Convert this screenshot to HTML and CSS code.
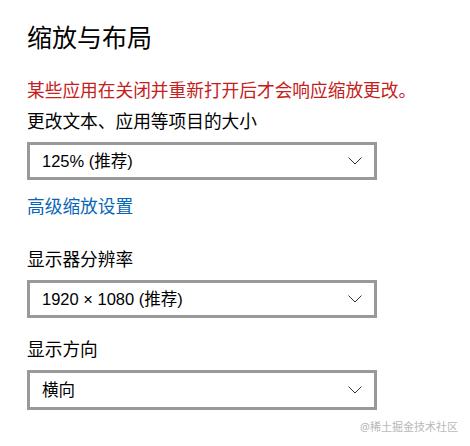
FILE: index.html
```html
<!DOCTYPE html>
<html lang="zh-CN">
<head>
<meta charset="utf-8">
<title>缩放与布局</title>
<link rel="stylesheet" href="styles.css">
</head>
<body>
<main class="page">
  <h1 class="title">缩放与布局</h1>
  <p class="note">某些应用在关闭并重新打开后才会响应缩放更改。</p>
  <p class="label">更改文本、应用等项目的大小</p>
  <div class="select">
    <span class="value">125% (推荐)</span>
    <svg class="chev" width="14" height="8" viewBox="0 0 14 8"><polyline points="0.5,0.5 7,7 13.5,0.5" fill="none" stroke="#333" stroke-width="1"/></svg>
  </div>
  <a class="link" href="#">高级缩放设置</a>
  <p class="label label-gap">显示器分辨率</p>
  <div class="select">
    <span class="value">1920 × 1080 (推荐)</span>
    <svg class="chev" width="14" height="8" viewBox="0 0 14 8"><polyline points="0.5,0.5 7,7 13.5,0.5" fill="none" stroke="#333" stroke-width="1"/></svg>
  </div>
  <p class="label label-gap2">显示方向</p>
  <div class="select select-tall">
    <span class="value">横向</span>
    <svg class="chev" width="14" height="8" viewBox="0 0 14 8"><polyline points="0.5,0.5 7,7 13.5,0.5" fill="none" stroke="#333" stroke-width="1"/></svg>
  </div>
</main>
<div class="watermark">@稀土掘金技术社区</div>
</body>
</html>
```
FILE: styles.css
```css
html, body {
  margin: 0;
  padding: 0;
  background: #fff;
}
body {
  width: 470px;
  height: 446px;
  position: relative;
  overflow: hidden;
  font-family: "Noto Sans", "Noto Sans CJK SC", sans-serif;
  color: #000;
}
.page {
  display: flex;
  flex-direction: column;
  align-items: flex-start;
  padding: 21px 0 0 27px;
}
.title {
  margin: 0;
  font-size: 25px;
  line-height: 32px;
  font-weight: 400;
}
.note {
  margin: 25px 0 0;
  font-size: 17.7px;
  line-height: 24px;
  color: #c42020;
  white-space: nowrap;
}
.label {
  margin: 7px 0 0;
  font-size: 17.7px;
  line-height: 24px;
}
.label-gap {
  margin-top: 29px;
}
.label-gap2 {
  margin-top: 19px;
}
.select {
  box-sizing: border-box;
  width: 350px;
  height: 38px;
  margin-top: 9px;
  border: 3px solid #999;
  display: flex;
  align-items: center;
  justify-content: space-between;
  padding: 0 12px 0 12px;
}
.select-tall {
  height: 40px;
}
.value {
  font-family: "Liberation Sans", "Noto Sans CJK SC", sans-serif;
  font-size: 16.5px;
  line-height: 20px;
}
.chev {
  display: block;
}
.link {
  margin-top: 14px;
  font-size: 17.7px;
  line-height: 24px;
  color: #0866b8;
  text-decoration: none;
}
.watermark {
  position: absolute;
  right: 12px;
  bottom: 12px;
  font-size: 11px;
  line-height: 14px;
  color: #b8b8b8;
}
```
